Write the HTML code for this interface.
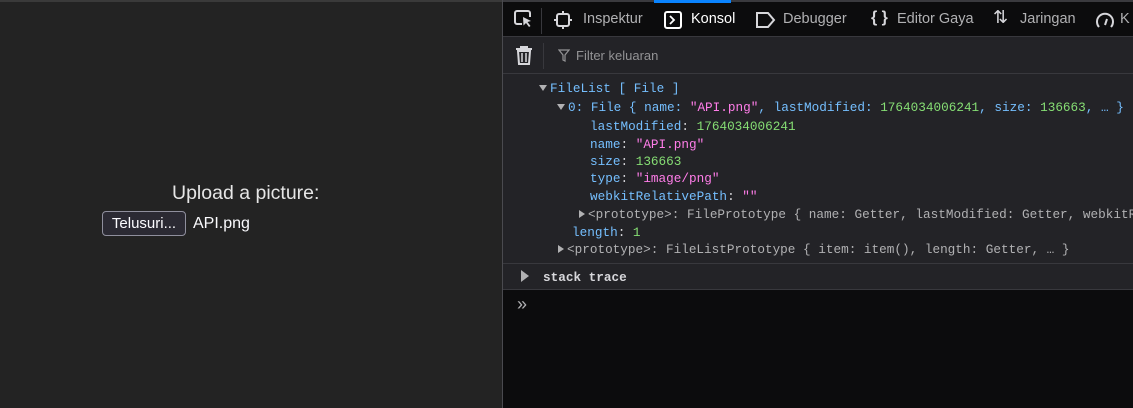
<!DOCTYPE html>
<html><head><style>
*{margin:0;padding:0;box-sizing:border-box}
body{width:1133px;height:408px;overflow:hidden;background:#232323;position:relative;font-family:"Liberation Sans",sans-serif}
.a{position:absolute;white-space:pre}
#left{left:0;top:0;width:502px;height:408px;background:#232323;border-top:2px solid #3a3a3a}
#sep{left:502px;top:0;width:1px;height:408px;background:#4a4a4f}
#dt{left:503px;top:0;width:630px;height:408px;background:#232327;overflow:hidden}
#tb{left:0;top:0;width:630px;height:37px;background:#0c0c0d;border-top:2px solid #3a3a3e;border-bottom:1px solid #38383d}
.tab{position:absolute;top:9px;font-size:14.5px;color:#b1b1b3}
#fr{left:0;top:37px;width:630px;height:37px;background:#232327;border-bottom:1px solid #38383d}
.m{font-family:"Liberation Mono",monospace;font-size:12.7px;position:absolute;white-space:pre;color:#b1b1b3}
.b{color:#75bfff}.p{color:#ff7de9}.g{color:#86de74}.w{color:#d7d7db}
.tri{display:inline-block;width:0;height:0;border-left:4px solid transparent;border-right:4px solid transparent;border-top:6px solid #b1b1b3;margin-right:3px;vertical-align:1px}
.tr{display:inline-block;width:0;height:0;border-top:4px solid transparent;border-bottom:4px solid transparent;border-left:6px solid #b1b1b3;margin-right:3px;vertical-align:0}
</style></head><body>
<div class="a" id="left">
 <div class="a" style="left:172px;top:180px;font-size:19.5px;color:#e6e6e6">Upload a picture:</div>
 <div class="a" style="left:102px;top:209px;width:84px;height:25px;border:1px solid #8f8f9d;border-radius:4px;background:#2b2a33;color:#fbfbfe;font-size:15px;line-height:23px;text-align:center">Telusuri...</div>
 <div class="a" style="left:193px;top:213px;font-size:16px;color:#fbfbfe">API.png</div>
</div>
<div class="a" id="sep"></div>
<div class="a" id="dt">
 <div class="a" id="tb">
  <svg class="a" style="left:10px;top:7px" width="22" height="20" viewBox="0 0 22 20"><path d="M9 15H4a2 2 0 0 1-2-2V4a2 2 0 0 1 2-2h11a2 2 0 0 1 2 2v4" fill="none" stroke="#d7d7db" stroke-width="2"/><path d="M10 8l8 4-3.5 1 3 4-1.5 1-3-4-2.5 2.5z" fill="#d7d7db"/></svg>
  <div class="a" style="left:38px;top:6px;width:1px;height:26px;background:#38383d"></div>
  <svg class="a" style="left:51px;top:9px" width="18" height="18" viewBox="0 0 18 18"><rect x="3" y="3" width="12" height="12" rx="2" fill="none" stroke="#d7d7db" stroke-width="2"/><path d="M9 0v3M9 15v3M0 9h3M15 9h3" stroke="#d7d7db" stroke-width="2"/></svg>
  <div class="tab" style="left:80px">Inspektur</div>
  <div class="a" style="left:151px;top:-2px;width:77px;height:3px;background:#0a84ff"></div>
  <svg class="a" style="left:161px;top:9px" width="18" height="18" viewBox="0 0 18 18"><rect x="1" y="1" width="16" height="16" rx="2" fill="none" stroke="#fff" stroke-width="2"/><path d="M6 5l4 4-4 4" fill="none" stroke="#fff" stroke-width="1.8"/></svg>
  <div class="tab" style="left:188px;color:#fff">Konsol</div>
  <svg class="a" style="left:253px;top:10px" width="20" height="16" viewBox="0 0 20 16"><path d="M1 1h11l6 7-6 7H1z" fill="none" stroke="#d7d7db" stroke-width="2"/></svg>
  <div class="tab" style="left:280px">Debugger</div>
  <div class="tab" style="left:368px;font-weight:bold;color:#d7d7db;font-size:16px;top:7px">{ }</div>
  <div class="tab" style="left:394px">Editor Gaya</div>
  <div class="tab" style="left:490px;font-size:18px;top:5px;color:#d7d7db">⇅</div>
  <div class="tab" style="left:517px">Jaringan</div>
  <svg class="a" style="left:592px;top:9px" width="20" height="18" viewBox="0 0 20 18"><path d="M4 16A8 8 0 1 1 16 16" fill="none" stroke="#d7d7db" stroke-width="2"/><path d="M10 14l2-6" stroke="#d7d7db" stroke-width="2"/></svg>
  <div class="tab" style="left:617px">K</div>
 </div>
 <div class="a" id="fr">
  <svg class="a" style="left:12px;top:9px" width="18" height="20" viewBox="0 0 18 20"><path d="M1 3h16M6 3V1h6v2M3 5l1 13h10l1-13z" fill="none" stroke="#d7d7db" stroke-width="2"/><path d="M7 7v9M11 7v9" stroke="#d7d7db" stroke-width="1.5"/></svg>
  <div class="a" style="left:40px;top:6px;width:1px;height:26px;background:#38383d"></div>
  <svg class="a" style="left:55px;top:12px" width="12" height="13" viewBox="0 0 12 13"><path d="M1 1h10L7 6v6L5 11V6z" fill="none" stroke="#939395" stroke-width="1.2"/></svg>
  <div class="a" style="left:73px;top:11px;font-size:13px;color:#939395">Filter keluaran</div>
 </div>
 <div class="m b" style="left:36px;top:81px"><span class="tri"></span>FileList [ File ]</div>
 <div class="m" style="left:54px;top:100px"><span class="tri"></span><span class="b">0: File { name: </span><span class="p">"API.png"</span><span class="b">, lastModified: </span><span class="g">1764034006241</span><span class="b">, size: </span><span class="g">136663</span><span class="b">, … }</span></div>
 <div class="m" style="left:87px;top:119px"><span class="b">lastModified</span><span class="w">: </span><span class="g">1764034006241</span></div>
 <div class="m" style="left:87px;top:137px"><span class="b">name</span><span class="w">: </span><span class="p">"API.png"</span></div>
 <div class="m" style="left:87px;top:154px"><span class="b">size</span><span class="w">: </span><span class="g">136663</span></div>
 <div class="m" style="left:87px;top:171px"><span class="b">type</span><span class="w">: </span><span class="p">"image/png"</span></div>
 <div class="m" style="left:87px;top:189px"><span class="b">webkitRelativePath</span><span class="w">: </span><span class="p">""</span></div>
 <div class="m" style="left:76px;top:207px"><span class="tr"></span>&lt;prototype&gt;: FilePrototype { name: Getter, lastModified: Getter, webkitRelativePath: Getter }</div>
 <div class="m" style="left:69px;top:225px"><span class="b">length</span><span class="w">: </span><span class="g">1</span></div>
 <div class="m" style="left:55px;top:242px"><span class="tr"></span>&lt;prototype&gt;: FileListPrototype { item: item(), length: Getter, … }</div>
 <div class="a" style="left:0;top:263px;width:630px;height:1px;background:#38383d"></div>
 <div class="a" style="left:18px;top:270px;width:0;height:0;border-top:6px solid transparent;border-bottom:6px solid transparent;border-left:8px solid #b1b1b3"></div>
 <div class="m" style="left:40px;top:270px;color:#d7d7db;font-weight:bold">stack trace</div>
 <div class="a" style="left:0;top:289px;width:630px;height:119px;background:#0c0c0d;border-top:1px solid #38383d"></div>
 <div class="a" style="left:14px;top:294px;font-size:18px;color:#b1b1b3">»</div>
</div>
</body></html>
